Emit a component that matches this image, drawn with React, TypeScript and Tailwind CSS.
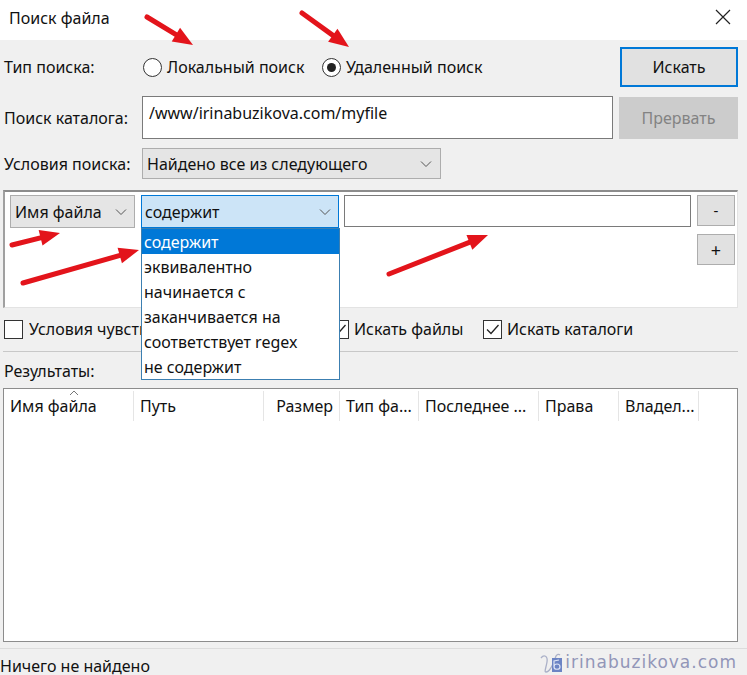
import React from 'react';

const font = { fontFamily: '"Noto Sans", "Open Sans", sans-serif' };

function Chevron() {
  return (
    <svg width="12" height="8" viewBox="0 0 12 8" className="shrink-0">
      <path d="M1 1.5 L6 6.5 L11 1.5" fill="none" stroke="#555" strokeWidth="1" />
    </svg>
  );
}

function Radio({ checked }: { checked?: boolean }) {
  return (
    <span className="w-[19px] h-[19px] rounded-full border border-[#333] bg-white flex items-center justify-center shrink-0">
      {checked && <span className="w-[9px] h-[9px] rounded-full bg-[#222]" />}
    </span>
  );
}

function Checkbox({ checked }: { checked?: boolean }) {
  return (
    <span className="w-[19px] h-[19px] border border-[#333] bg-white flex items-center justify-center shrink-0">
      {checked && (
        <svg width="15" height="15" viewBox="0 0 15 15">
          <path d="M2 7.5 L6 11.5 L13.5 3" fill="none" stroke="#222" strokeWidth="1.3" />
        </svg>
      )}
    </span>
  );
}

type Pt = [number, number];

function Arrow({ from, to }: { from: Pt; to: Pt }) {
  const dx = to[0] - from[0];
  const dy = to[1] - from[1];
  const len = Math.hypot(dx, dy);
  const ux = dx / len;
  const uy = dy / len;
  const head = 20;
  const half = 8;
  const bx = to[0] - ux * head;
  const by = to[1] - uy * head;
  const p1 = `${bx - uy * half},${by + ux * half}`;
  const p2 = `${bx + uy * half},${by - ux * half}`;
  return (
    <g>
      <line x1={from[0]} y1={from[1]} x2={bx + ux * 4} y2={by + uy * 4} stroke="#e3141b" strokeWidth="5" strokeLinecap="round" />
      <polygon points={`${to[0]},${to[1]} ${p1} ${p2}`} fill="#e3141b" />
    </g>
  );
}

const options = ['содержит', 'эквивалентно', 'начинается с', 'заканчивается на', 'соответствует regex', 'не содержит'];

const columns = [
  { name: 'Имя файла', w: 'w-[130px]', align: 'justify-start' },
  { name: 'Путь', w: 'w-[130px]', align: 'justify-start' },
  { name: 'Размер', w: 'w-[76px]', align: 'justify-end' },
  { name: 'Тип фа...', w: 'w-[79px]', align: 'justify-start' },
  { name: 'Последнее ...', w: 'w-[120px]', align: 'justify-start' },
  { name: 'Права', w: 'w-[80px]', align: 'justify-start' },
  { name: 'Владел...', w: 'w-[80px]', align: 'justify-start' },
];

export default function App() {
  return (
    <div className="relative w-[747px] h-[675px] bg-[#f0f0f0] overflow-hidden text-[16px] text-[#111] flex flex-col" style={font}>
      {/* title bar */}
      <div className="h-[40px] bg-white flex items-center justify-between pl-[9px] pr-[16px] shrink-0">
        <span className="-mt-[4px]">Поиск файла</span>
        <svg width="16" height="16" viewBox="0 0 16 16" className="-mt-[6px]">
          <path d="M1 1 L15 15 M15 1 L1 15" stroke="#222" strokeWidth="1.2" />
        </svg>
      </div>

      {/* row 1 */}
      <div className="flex items-center h-[40px] mt-[7px] pl-[4px] pr-[9px]">
        <span className="w-[139px]">Тип поиска:</span>
        <Radio />
        <span className="ml-[5px] w-[155px]">Локальный поиск</span>
        <Radio checked />
        <span className="ml-[5px]">Удаленный поиск</span>
        <button className="ml-auto w-[118px] h-[40px] border-2 border-[#0078d7] bg-[#e1e1e1]">Искать</button>
      </div>

      {/* row 2 */}
      <div className="flex items-center h-[43px] mt-[9px] pl-[4px] pr-[9px]">
        <span className="w-[138px]">Поиск каталога:</span>
        <div className="w-[471px] h-[43px] bg-white border border-[#7a7a7a] pl-[6px] pt-[4px]">/www/irinabuzikova.com/myfile</div>
        <button className="ml-auto w-[119px] h-[42px] bg-[#cccccc] text-[#838383]">Прервать</button>
      </div>

      {/* row 3 */}
      <div className="flex items-center h-[31px] mt-[9px] pl-[4px]">
        <span className="w-[138px]">Условия поиска:</span>
        <div className="w-[299px] h-[31px] bg-[#e5e5e5] border border-[#adadad] flex items-center justify-between pl-[4px] pr-[8px]">
          <span>Найдено все из следующего</span>
          <Chevron />
        </div>
      </div>

      {/* conditions panel */}
      <div className="mt-[11px] ml-[3px] w-[735px] h-[118px] bg-white border-t-2 border-l-2 border-t-[#8c8c8c] border-l-[#a0a0a0] border-r border-b border-r-[#e3e3e3] border-b-[#e3e3e3] pt-[3px] pl-[5px] flex gap-[6px]">
        <div className="w-[125px] h-[33px] bg-[#e5e5e5] border border-[#adadad] flex items-center justify-between pl-[4px] pr-[7px]">
          <span>Имя файла</span>
          <Chevron />
        </div>
        <div className="w-[198px] h-[33px] bg-[#cce4f7] border border-[#0078d7] flex items-center justify-between pl-[3px] pr-[7px]">
          <span>содержит</span>
          <Chevron />
        </div>
        <div className="-ml-[1px] w-[347px] h-[32px] bg-white border border-[#7a7a7a]" />
        <div className="flex flex-col gap-[8px]">
          <button className="w-[38px] h-[31px] bg-[#e1e1e1] border border-[#adadad] text-[15px] leading-none">-</button>
          <button className="w-[38px] h-[31px] bg-[#e1e1e1] border border-[#adadad] text-[18px] leading-none">+</button>
        </div>
      </div>

      {/* checkbox row */}
      <div className="flex items-center h-[20px] mt-[11px] pl-[4px]">
        <div className="w-[326px] flex items-center">
          <Checkbox />
          <span className="ml-[6px] w-[112px] overflow-hidden whitespace-nowrap">Условия чувствительны к регистру</span>
        </div>
        <div className="w-[153px] flex items-center">
          <Checkbox checked />
          <span className="ml-[5px]">Искать файлы</span>
        </div>
        <Checkbox checked />
        <span className="ml-[5px]">Искать каталоги</span>
      </div>

      <div className="mt-[12px] ml-[3px] w-[735px] h-px bg-[#c8c8c8]" />

      <div className="mt-[9px] pl-[4px] leading-[20px]">Результаты:</div>

      {/* results table */}
      <div className="mt-[7px] ml-[3px] w-[735px] h-[254px] bg-white border border-[#8c8c8c] pt-[2px] flex flex-col">
        <div className="flex h-[30px] relative">
          {columns.map((c) => (
            <div key={c.name} className={`${c.w} h-full border-r border-[#e5e5e5] flex items-center px-[6px] ${c.align}`}>
              <span className="whitespace-nowrap">{c.name}</span>
            </div>
          ))}
          <svg width="10" height="6" viewBox="0 0 10 6" className="absolute left-[65px] top-[-1px]">
            <path d="M1 5 L5 1 L9 5" fill="none" stroke="#777" strokeWidth="1" />
          </svg>
        </div>
      </div>

      <div className="mt-[6px] w-full h-px bg-[#dcdcdc]" />

      {/* status bar */}
      <div className="flex items-center justify-between h-[26px] pr-[10px]">
        <span className="pt-[7px]">Ничего не найдено</span>
        <div className="flex items-center pt-[2px]">
          <svg width="24" height="22" viewBox="0 0 24 22">
            <path d="M2 6 C5 2 9 4 8 10 C7 16 5 20 7 20 C11 20 15 10 17 4 C18 2 20 2 21 3" fill="none" stroke="#aab0c8" strokeWidth="1.3" />
            <rect x="13" y="6" width="10" height="14" fill="#6c84c4" />
            <path d="M15 15 C15 11 21 11 21 15 C21 18 15 18 15 15 Z M15 15 L15 9 L20 8" fill="none" stroke="#dde4f5" strokeWidth="1.2" />
          </svg>
          <span className="ml-[2px] text-[#9296b8] tracking-[1px] text-[17px]" style={{ fontFamily: '"DejaVu Sans", sans-serif' }}>irinabuzikova.com</span>
        </div>
      </div>

      {/* dropdown list overlay */}
      <div className="absolute left-[141px] top-[228px] w-[199px] h-[152px] bg-white border border-[#3c7fb1] flex flex-col">
        {options.map((o, i) => (
          <div key={o} className={`h-[25px] flex items-center pl-[2px] ${i === 0 ? 'bg-[#0078d7] text-white' : ''}`}>
            {o}
          </div>
        ))}
      </div>

      {/* annotation arrows */}
      <svg className="absolute inset-0 pointer-events-none" width="747" height="675">
        <Arrow from={[147, 17]} to={[193, 45]} />
        <Arrow from={[302, 13]} to={[349, 47]} />
        <Arrow from={[12, 245]} to={[60, 233]} />
        <Arrow from={[23, 283]} to={[139, 250]} />
        <Arrow from={[389, 274]} to={[488, 235]} />
      </svg>
    </div>
  );
}
